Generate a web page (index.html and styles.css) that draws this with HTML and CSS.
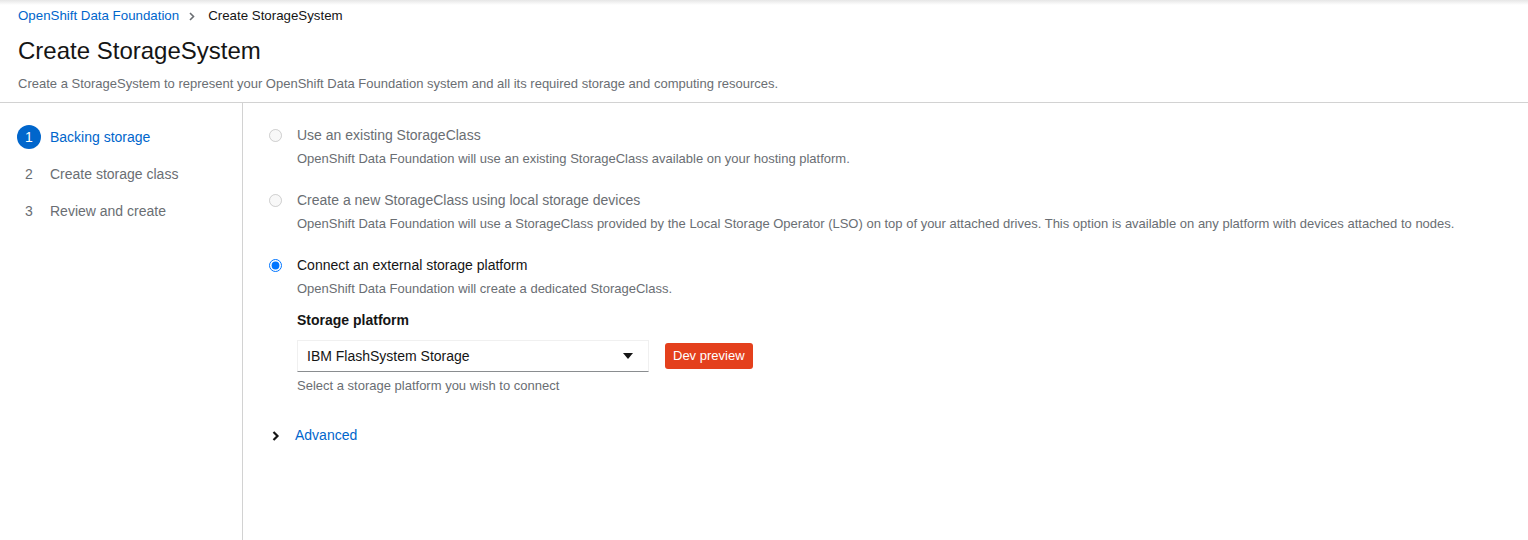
FILE: index.html
```html
<!DOCTYPE html>
<html>
<head>
<meta charset="utf-8">
<link rel="stylesheet" href="styles.css">
</head>
<body>
<div class="shadow"></div>
<header class="page-header">
  <nav class="breadcrumb">
    <a class="crumb-link">OpenShift Data Foundation</a>
    <svg class="crumb-sep" width="6" height="9" viewBox="0 0 6 9"><path d="M1 1 L4.5 4.5 L1 8" fill="none" stroke="#6a6e73" stroke-width="1.6"/></svg>
    <span class="crumb-current">Create StorageSystem</span>
  </nav>
  <h1 class="title">Create StorageSystem</h1>
  <p class="subtitle">Create a StorageSystem to represent your OpenShift Data Foundation system and all its required storage and computing resources.</p>
</header>
<div class="wizard">
  <aside class="wizard-nav">
    <div class="step current"><span class="step-num">1</span><span class="step-text">Backing storage</span></div>
    <div class="step"><span class="step-num">2</span><span class="step-text">Create storage class</span></div>
    <div class="step"><span class="step-num">3</span><span class="step-text">Review and create</span></div>
  </aside>
  <main class="wizard-body">
    <div class="radio disabled">
      <input type="radio" name="bs" disabled>
      <div class="radio-label">Use an existing StorageClass</div>
      <div class="radio-desc">OpenShift Data Foundation will use an existing StorageClass available on your hosting platform.</div>
    </div>
    <div class="radio disabled">
      <input type="radio" name="bs" disabled>
      <div class="radio-label">Create a new StorageClass using local storage devices</div>
      <div class="radio-desc">OpenShift Data Foundation will use a StorageClass provided by the Local Storage Operator (LSO) on top of your attached drives. This option is available on any platform with devices attached to nodes.</div>
    </div>
    <div class="radio">
      <input type="radio" name="bs" checked>
      <div class="radio-label">Connect an external storage platform</div>
      <div class="radio-desc">OpenShift Data Foundation will create a dedicated StorageClass.</div>
      <div class="form-group">
        <div class="form-label">Storage platform</div>
        <div class="select-row">
          <div class="select">
            <span>IBM FlashSystem Storage</span>
            <svg class="caret" width="10" height="6" viewBox="0 0 10 6"><path d="M0 0 H10 L5 6 Z" fill="#151515"/></svg>
          </div>
          <span class="badge">Dev preview</span>
        </div>
        <div class="helper">Select a storage platform you wish to connect</div>
      </div>
    </div>
    <div class="expand">
      <svg class="chev" width="8" height="10" viewBox="0 0 8 10"><path d="M1.5 1 L5.5 5 L1.5 9" fill="none" stroke="#151515" stroke-width="2.2"/></svg>
      <span class="expand-text">Advanced</span>
    </div>
  </main>
</div>
</body>
</html>
```

FILE: styles.css
```css
html, body {
  margin: 0;
  padding: 0;
  background: #fff;
  font-family: "Liberation Sans", Arial, sans-serif;
  color: #151515;
}
.shadow {
  height: 5px;
  background: linear-gradient(#e6e6e6, #ffffff);
}
.page-header {
  padding: 1px 18px 9px;
  border-bottom: 1px solid #d2d2d2;
}
.breadcrumb {
  display: flex;
  align-items: center;
  font-size: 13.3px;
  line-height: 20px;
}
.crumb-link { color: #06c; }
.crumb-sep { margin: 0 13px 0 10px; }
.crumb-current { color: #151515; }
.title {
  margin: 10px 0 0;
  font-size: 24px;
  line-height: 30px;
  font-weight: 400;
}
.subtitle {
  margin: 9px 0 0;
  font-size: 13px;
  line-height: 18px;
  color: #6a6e73;
}
.wizard {
  display: flex;
  min-height: 440px;
}
.wizard-nav {
  width: 243px;
  flex: none;
  border-right: 1px solid #d2d2d2;
  padding: 22px 0 0 17px;
  box-sizing: border-box;
  display: flex;
  flex-direction: column;
  gap: 13px;
}
.step {
  display: flex;
  align-items: center;
  gap: 9px;
  font-size: 14px;
  line-height: 24px;
  color: #6a6e73;
}
.step-num {
  width: 24px;
  height: 24px;
  border-radius: 50%;
  display: flex;
  align-items: center;
  justify-content: center;
  color: #6a6e73;
}
.step.current .step-num { background: #06c; color: #fff; }
.step.current .step-text { color: #06c; }
.wizard-body {
  flex: 1;
  padding: 22px 0 0 26px;
}
.radio {
  display: grid;
  grid-template-columns: 13px 1fr;
  column-gap: 15px;
  margin-bottom: 22px;
}
.radio:last-of-type { margin-bottom: 0; }
.radio input {
  margin: 4px 0 0;
  width: 13px;
  height: 13px;
  grid-row: 1;
  grid-column: 1;
}
.radio-label {
  grid-column: 2;
  font-size: 14px;
  line-height: 21px;
}
.radio.disabled .radio-label { color: #6a6e73; }
.radio-desc {
  grid-column: 2;
  margin-top: 4px;
  font-size: 13px;
  line-height: 18px;
  color: #6a6e73;
}
.form-group {
  grid-column: 2;
  margin-top: 12px;
}
.form-label {
  font-size: 14px;
  line-height: 21px;
  font-weight: 700;
}
.select-row {
  display: flex;
  align-items: center;
  gap: 16px;
  margin-top: 9px;
}
.select {
  width: 352px;
  height: 32px;
  box-sizing: border-box;
  border: 1px solid #f0f0f0;
  border-bottom-color: #8a8d90;
  display: flex;
  align-items: center;
  justify-content: space-between;
  padding: 0 15px 0 9px;
  font-size: 14px;
}
.badge {
  background: #e4401c;
  color: #fff;
  font-size: 13px;
  line-height: 26px;
  padding: 0 8px;
  border-radius: 3px;
}
.helper {
  margin-top: 5px;
  font-size: 13px;
  line-height: 18px;
  color: #6a6e73;
}
.expand {
  display: flex;
  align-items: center;
  margin-top: 30px;
  font-size: 14px;
  line-height: 21px;
}
.chev { margin-left: 3px; margin-right: 15px; }
.expand-text { color: #06c; }
```
